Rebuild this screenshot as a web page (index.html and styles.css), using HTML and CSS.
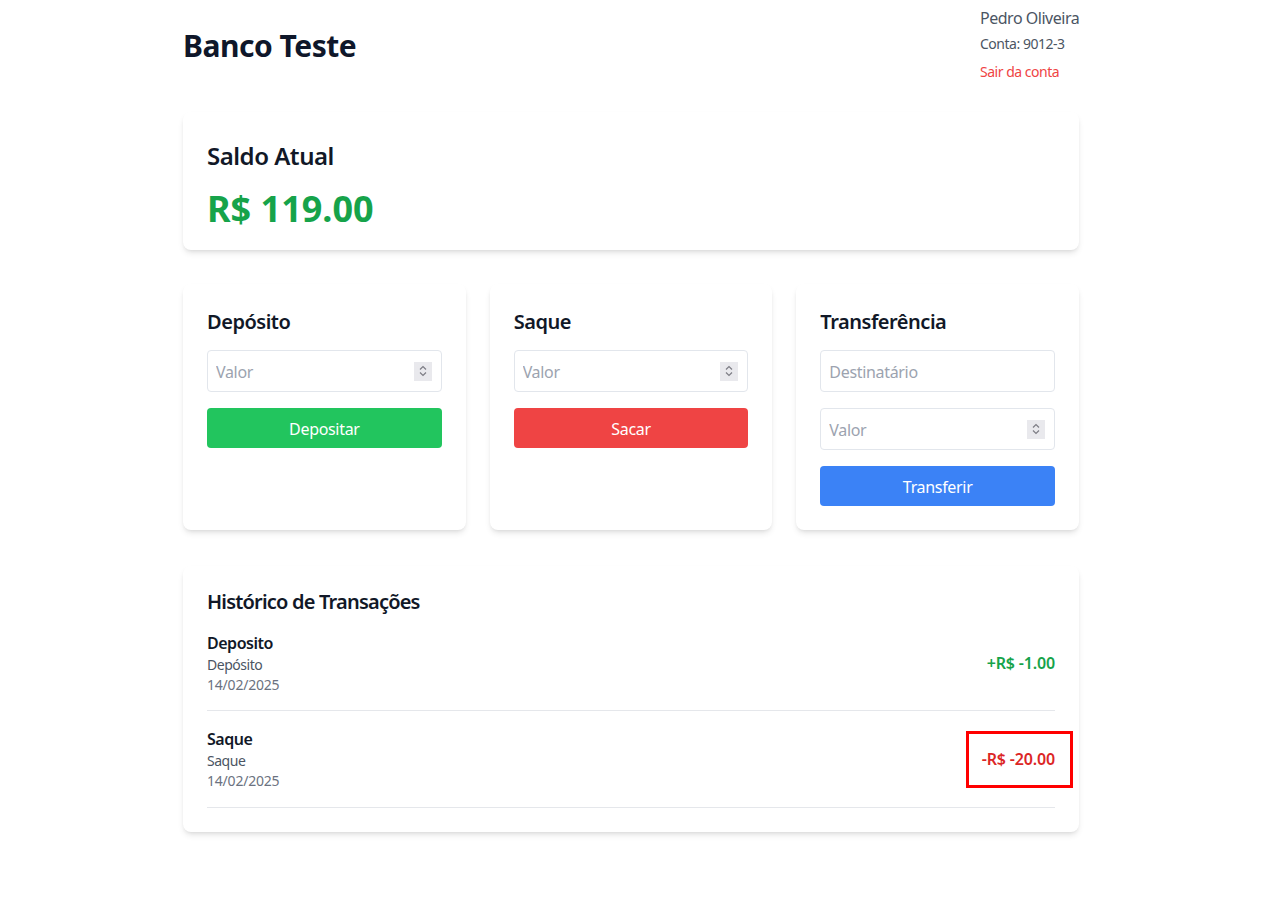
FILE: index.html
```html
<!DOCTYPE html>
<html lang="pt-BR">
<head>
<meta charset="utf-8">
<title>Banco Teste</title>
<link rel="stylesheet" href="styles.css">
</head>
<body>
<div class="page">
  <header class="header">
    <h1 class="brand">Banco Teste</h1>
    <div class="user">
      <p class="user-name">Pedro Oliveira</p>
      <p class="user-account">Conta: 9012-3</p>
      <button class="logout">Sair da conta</button>
    </div>
  </header>

  <section class="card balance">
    <h2 class="balance-title">Saldo Atual</h2>
    <p class="balance-value">R$ 119.00</p>
  </section>

  <div class="actions">
    <section class="card action">
      <h3 class="card-title">Depósito</h3>
      <div class="field">
        <input class="field-input" type="text" placeholder="Valor">
        <span class="spin"><svg width="12" height="16" viewBox="0 0 12 16"><path d="M3 6.5 L6 3.5 L9 6.5 M3 9.5 L6 12.5 L9 9.5" fill="none" stroke="#7d7d85" stroke-width="1.2"/></svg></span>
      </div>
      <button class="btn btn-green">Depositar</button>
    </section>
    <section class="card action">
      <h3 class="card-title">Saque</h3>
      <div class="field">
        <input class="field-input" type="text" placeholder="Valor">
        <span class="spin"><svg width="12" height="16" viewBox="0 0 12 16"><path d="M3 6.5 L6 3.5 L9 6.5 M3 9.5 L6 12.5 L9 9.5" fill="none" stroke="#7d7d85" stroke-width="1.2"/></svg></span>
      </div>
      <button class="btn btn-red">Sacar</button>
    </section>
    <section class="card action">
      <h3 class="card-title">Transferência</h3>
      <div class="field">
        <input class="field-input" type="text" placeholder="Destinatário">
      </div>
      <div class="field">
        <input class="field-input" type="text" placeholder="Valor">
        <span class="spin"><svg width="12" height="16" viewBox="0 0 12 16"><path d="M3 6.5 L6 3.5 L9 6.5 M3 9.5 L6 12.5 L9 9.5" fill="none" stroke="#7d7d85" stroke-width="1.2"/></svg></span>
      </div>
      <button class="btn btn-blue">Transferir</button>
    </section>
  </div>

  <section class="card history">
    <h3 class="card-title history-title">Histórico de Transações</h3>
    <ul class="tx-list">
      <li class="tx">
        <div class="tx-info">
          <p class="tx-name">Deposito</p>
          <p class="tx-type">Depósito</p>
          <p class="tx-date">14/02/2025</p>
        </div>
        <span class="tx-amount tx-in">+R$ -1.00</span>
      </li>
      <li class="tx">
        <div class="tx-info">
          <p class="tx-name">Saque</p>
          <p class="tx-type">Saque</p>
          <p class="tx-date">14/02/2025</p>
        </div>
        <span class="tx-amount tx-out">-R$ -20.00<span class="highlight"></span></span>
      </li>
    </ul>
  </section>
</div>
</body>
</html>
```

FILE: styles.css
```css
* {
  box-sizing: border-box;
}

html, body {
  margin: 0;
  padding: 0;
  background: #ffffff;
}

body {
  font-family: "Segoe UI", "Noto Sans", "Open Sans", sans-serif;
  color: #111827;
  padding-right: 10px;
  letter-spacing: -0.03em;
}

p, h1, h2, h3, ul {
  margin: 0;
  padding: 0;
}

.page {
  width: 896px;
  margin: 0 auto;
  padding-bottom: 60px;
}

.header {
  height: 88px;
  display: flex;
  justify-content: space-between;
  align-items: center;
  margin-bottom: 24px;
}

.brand {
  font-size: 30px;
  line-height: 36px;
  font-weight: 700;
  color: #0f172a;
  margin-top: 4px;
}

.user {
  width: 99px;
  display: flex;
  flex-direction: column;
  align-items: flex-start;
  white-space: nowrap;
}

.user-name {
  font-size: 16px;
  line-height: 24px;
  color: #4b5563;
}

.user-account {
  margin-top: 4px;
  font-size: 14px;
  line-height: 20px;
  color: #4b5563;
}

.logout {
  margin-top: 8px;
  padding: 0;
  border: 0;
  background: none;
  font-family: inherit;
  font-size: 14px;
  line-height: 20px;
  letter-spacing: inherit;
  color: #ef4444;
  cursor: pointer;
}

.card {
  background: #ffffff;
  border-radius: 8px;
  box-shadow: 0 4px 6px -1px rgba(0, 0, 0, 0.1), 0 2px 4px -2px rgba(0, 0, 0, 0.1);
  padding: 24px;
}

.balance {
  padding-top: 28px;
  padding-bottom: 21px;
  margin-bottom: 34px;
}

.balance-title {
  font-size: 24px;
  line-height: 32px;
  font-weight: 600;
  margin-bottom: 17px;
}

.balance-value {
  font-size: 36px;
  line-height: 40px;
  font-weight: 700;
  color: #16a34a;
  letter-spacing: 0;
}

.actions {
  display: grid;
  grid-template-columns: repeat(3, minmax(0, 1fr));
  gap: 24px;
  margin-bottom: 36px;
}

.action {
  display: flex;
  flex-direction: column;
  min-width: 0;
}

.card-title {
  font-size: 20px;
  line-height: 28px;
  font-weight: 600;
  margin-bottom: 14px;
}

.field {
  display: flex;
  align-items: center;
  height: 42px;
  border: 1px solid #e2e6ec;
  border-radius: 4px;
  padding: 0 9px 0 8px;
  margin-bottom: 16px;
}

.field-input {
  flex: 1;
  width: 0;
  min-width: 0;
  border: 0;
  outline: none;
  padding: 2px 0 0;
  font-family: inherit;
  font-size: 16px;
  line-height: 24px;
  letter-spacing: -0.02em;
  color: #111827;
  background: transparent;
}

.field-input::placeholder {
  color: #9ca3af;
}

.spin {
  width: 18px;
  height: 19px;
  background: #e9e9ed;
  display: flex;
  align-items: center;
  justify-content: center;
}

.btn {
  height: 40px;
  border: 0;
  border-radius: 4px;
  padding: 2px 0 0;
  font-family: inherit;
  font-size: 16px;
  line-height: 24px;
  letter-spacing: -0.02em;
  color: #ffffff;
  cursor: pointer;
}

.btn-green { background: #22c55e; }
.btn-red { background: #ef4444; }
.btn-blue { background: #3b82f6; }

.history {
  padding-top: 22px;
}

.history-title {
  margin-bottom: 0;
  letter-spacing: -0.04em;
}

.tx-list {
  list-style: none;
}

.tx {
  display: flex;
  justify-content: space-between;
  align-items: center;
  padding: 15px 0 15px;
  border-bottom: 1px solid #e5e7eb;
}

.tx + .tx {
  padding-top: 16px;
  padding-bottom: 16px;
}

.tx-name {
  font-size: 16px;
  line-height: 24px;
  font-weight: 600;
  color: #111827;
}

.tx-type {
  font-size: 14px;
  line-height: 20px;
  color: #4b5563;
}

.tx-date {
  font-size: 14px;
  line-height: 20px;
  color: #6b7280;
  letter-spacing: -0.015em;
}

.tx-amount {
  position: relative;
  font-size: 16px;
  line-height: 24px;
  font-weight: 600;
  letter-spacing: -0.01em;
}

.tx-in { color: #16a34a; }
.tx-out { color: #dc2626; }

.highlight {
  position: absolute;
  left: -16px;
  right: -18px;
  top: -16px;
  bottom: -17px;
  border: 3px solid #ff0000;
}
```
